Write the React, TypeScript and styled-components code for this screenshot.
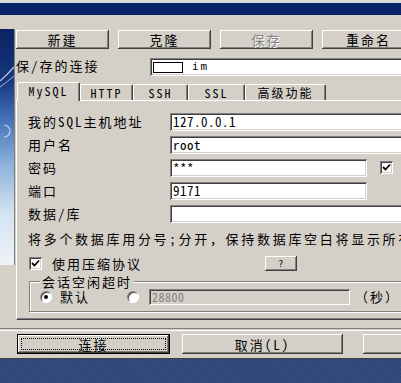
import React from "react";
import styled, { createGlobalStyle, css } from "styled-components";

const FONT = `"Noto Sans Mono CJK SC", "Noto Sans CJK SC", "DejaVu Sans", sans-serif`;
const FACE = "#d4d0c8";

const GlobalStyle = createGlobalStyle`
  html, body { margin: 0; padding: 0; background: ${FACE}; overflow: hidden; }
  body { font-family: ${FONT}; font-size: 13px; line-height: 16px; letter-spacing: 2px; color: #000; }
`;

const raised = css`
  box-shadow: inset -1px -1px #404040, inset 1px 1px #fff, inset -2px -2px #808080,
    inset 2px 2px ${FACE};
`;

const sunken = css`
  box-shadow: inset 1px 1px #808080, inset -1px -1px #fff, inset 2px 2px #404040,
    inset -2px -2px ${FACE};
`;

const Screen = styled.div`
  width: 401px;
  height: 383px;
  overflow: hidden;
  display: flex;
  flex-direction: column;
  background: ${FACE};
`;

const TopEdge = styled.div`
  flex: none;
  height: 3px;
  background: #dcdcdc;
`;

const TitleBar = styled.div`
  flex: none;
  height: 12px;
  background: #0a246a;
`;

const Body = styled.div`
  flex: none;
  display: grid;
  grid-template-columns: 16px 400px;
  height: 305px;
`;

const Banner = styled.div`
  margin-top: 14px;
  width: 15px;
  height: 236px;
  border-right: 1px solid #808080;
  box-sizing: border-box;
  svg {
    display: block;
  }
`;

const Main = styled.div`
  padding-top: 15px;
  display: flex;
  flex-direction: column;
`;

const ButtonRow = styled.div`
  display: grid;
  grid-template-columns: repeat(4, 93px);
  column-gap: 9px;
  height: 19px;
`;

const Button = styled.div<{ $disabled?: boolean }>`
  display: flex;
  align-items: center;
  justify-content: center;
  background: ${FACE};
  ${raised};
  font-size: 13px;
  line-height: 1;
  color: ${(p) => (p.$disabled ? "#808080" : "#000")};
  text-shadow: ${(p) => (p.$disabled ? "1px 1px 0 #fff" : "none")};
`;

const SavedRow = styled.div`
  margin-top: 9px;
  height: 18px;
  display: flex;
  align-items: center;
`;

const SavedLabel = styled.div`
  width: 134px;
  flex: none;
  white-space: nowrap;
  margin-top: -2px;
`;

const Combo = styled.div`
  flex: none;
  width: 270px;
  height: 18px;
  background: #fff;
  ${sunken};
  display: flex;
  align-items: center;
  padding-left: 3px;
  box-sizing: border-box;
`;

const Swatch = styled.div`
  width: 30px;
  height: 11px;
  border: 1px solid #000;
  box-sizing: border-box;
  background: #fff;
`;

const ComboText = styled.span`
  margin-left: 9px;
  font-family: "DejaVu Sans Mono", monospace;
  font-size: 11px;
  letter-spacing: 2px;
`;

const TabStrip = styled.div`
  margin-top: 6px;
  height: 18px;
  padding-left: 1px;
  display: flex;
  align-items: flex-end;
  position: relative;
  z-index: 1;
`;

const Tab = styled.div<{ $w: number; $active?: boolean }>`
  width: ${(p) => p.$w}px;
  height: ${(p) => (p.$active ? 19 : 16)}px;
  margin-bottom: ${(p) => (p.$active ? -1 : 0)}px;
  box-sizing: border-box;
  background: ${FACE};
  border-top: 1px solid #fff;
  border-left: 1px solid #fff;
  border-right: 1px solid #404040;
  border-radius: 2px 2px 0 0;
  box-shadow: inset -1px 0 #808080;
  display: flex;
  align-items: center;
  justify-content: center;
  font-size: 12px;
  line-height: 1;
  white-space: nowrap;
  padding-bottom: ${(p) => (p.$active ? 2 : 0)}px;
`;

const Panel = styled.div`
  width: 400px;
  height: 220px;
  box-sizing: border-box;
  border-left: 1px solid #fff;
  border-top: 1px solid #fff;
  border-bottom: 1px solid #404040;
  box-shadow: inset 0 -1px #808080;
  padding: 9px 0 0 11px;
  display: flex;
  flex-direction: column;
`;

const Fields = styled.div`
  display: grid;
  grid-template-columns: 142px 197px 60px;
  grid-auto-rows: 23px;
  align-items: center;
`;

const Label = styled.div`
  white-space: nowrap;
`;

const Input = styled.div<{ $full?: boolean; $disabled?: boolean }>`
  grid-column: ${(p) => (p.$full ? "2 / 4" : "2 / 3")};
  height: 18px;
  box-sizing: border-box;
  background: ${(p) => (p.$disabled ? FACE : "#fff")};
  color: ${(p) => (p.$disabled ? "#808080" : "#000")};
  ${sunken};
  display: flex;
  align-items: center;
  padding-left: 3px;
  font-size: 13px;
  letter-spacing: 0.5px;
  white-space: nowrap;
`;

const Check = styled.div<{ $offset?: number }>`
  width: 13px;
  height: 13px;
  box-sizing: border-box;
  margin-left: ${(p) => p.$offset ?? 0}px;
  background: #fff;
  ${sunken};
  display: flex;
  align-items: center;
  justify-content: center;
  svg {
    display: block;
  }
`;

const Hint = styled.div`
  margin-top: 4px;
  line-height: 20px;
  letter-spacing: 2.7px;
  white-space: nowrap;
  overflow: hidden;
`;

const CheckRow = styled.div`
  margin-top: 6px;
  height: 17px;
  display: grid;
  grid-template-columns: 237px 32px;
  align-items: center;
`;

const CheckLabel = styled.div`
  display: flex;
  align-items: center;
  gap: 10px;
  padding-left: 1px;
  white-space: nowrap;
`;

const SmallButton = styled.div`
  height: 15px;
  background: ${FACE};
  ${raised};
  display: flex;
  align-items: center;
  justify-content: center;
  font-family: "DejaVu Sans", sans-serif;
  font-size: 9px;
  letter-spacing: 0;
`;

const Group = styled.div`
  margin: 9px 0 0 1px;
  height: 31px;
  box-sizing: border-box;
  border: 1px solid #808080;
  box-shadow: inset 1px 1px #fff, 1px 1px #fff;
  padding-left: 10px;
`;

const Legend = styled.div`
  width: fit-content;
  margin: -8px 0 0 0;
  padding: 0 2px;
  line-height: 15px;
  background: ${FACE};
  white-space: nowrap;
`;

const RadioRow = styled.div`
  height: 16px;
  display: flex;
  align-items: center;
`;

const RadioOption = styled.div<{ $w?: number }>`
  display: flex;
  align-items: center;
  gap: 8px;
  width: ${(p) => (p.$w ? `${p.$w}px` : "auto")};
  flex: none;
`;

const Radio = styled.div<{ $on?: boolean }>`
  width: 12px;
  height: 12px;
  flex: none;
  box-sizing: border-box;
  border-radius: 50%;
  background: #fff;
  border: 1px solid;
  border-color: #808080 #fff #fff #808080;
  box-shadow: inset 1px 1px #404040;
  display: flex;
  align-items: center;
  justify-content: center;
  &::after {
    content: "";
    display: ${(p) => (p.$on ? "block" : "none")};
    width: 4px;
    height: 4px;
    border-radius: 50%;
    background: #000;
  }
`;

const TimeoutInput = styled(Input)`
  width: 201px;
  height: 16px;
  flex: none;
  margin-left: 10px;
  font-size: 12px;
`;

const Unit = styled.span`
  margin-left: 5px;
  white-space: nowrap;
`;

const Separator = styled.div`
  flex: none;
  margin-top: 8px;
  height: 1px;
  border-top: 1px solid #808080;
  border-bottom: 1px solid #fff;
`;

const BottomRow = styled.div`
  flex: none;
  margin-top: 3px;
  height: 20px;
  padding-left: 17px;
  display: flex;
`;

const BottomButton = styled(Button)<{ $w: number; $gap?: number }>`
  flex: none;
  width: ${(p) => p.$w}px;
  margin-left: ${(p) => p.$gap ?? 0}px;
`;

const DefaultButton = styled.div`
  flex: none;
  width: 153px;
  box-sizing: border-box;
  border: 1px solid #000;
  background: ${FACE};
  ${raised};
  display: flex;
  padding: 3px;
`;

const FocusRing = styled.div`
  flex: 1;
  border: 1px dotted #000;
  display: flex;
  align-items: center;
  justify-content: center;
  line-height: 1;
`;

const DialogFoot = styled.div`
  flex: none;
  height: 5px;
  box-sizing: border-box;
  border-bottom: 1px solid #404040;
`;

const Desktop = styled.div`
  flex: 1;
  background-color: #2e4878;
  background-image: repeating-linear-gradient(45deg, rgba(255, 255, 255, 0.04) 0 1px, transparent 1px 3px);
`;

function CheckMark() {
  return (
    <svg width="9" height="9" viewBox="0 0 9 9">
      <polyline points="1,4 3.5,6.5 8,1.5" fill="none" stroke="#000" strokeWidth="1.8" />
    </svg>
  );
}

function BannerArt() {
  return (
    <svg width="14" height="236" viewBox="0 0 14 236">
      <defs>
        <linearGradient id="bn" x1="0" y1="0" x2="0" y2="1">
          <stop offset="0" stopColor="#0b2262" />
          <stop offset="0.22" stopColor="#17387e" />
          <stop offset="0.4" stopColor="#4a78ba" />
          <stop offset="0.58" stopColor="#8fb3dc" />
          <stop offset="0.78" stopColor="#d4e3f2" />
          <stop offset="1" stopColor="#eef3f9" />
        </linearGradient>
      </defs>
      <rect width="14" height="236" fill="url(#bn)" />
      <path d="M0 52 Q7 46 14 38" stroke="#dfe9f7" strokeWidth="1.2" fill="none" opacity="0.8" />
      <path d="M0 58 Q8 52 14 47" stroke="#ffffff" strokeWidth="1" fill="none" opacity="0.6" />
      <path d="M4 96 A6 6 0 1 1 4 108" stroke="#e6eef9" strokeWidth="1.2" fill="none" opacity="0.7" />
    </svg>
  );
}

export default function App() {
  return (
    <>
      <GlobalStyle />
      <Screen>
        <TopEdge />
        <TitleBar />
        <Body>
          <Banner>
            <BannerArt />
          </Banner>
          <Main>
            <ButtonRow>
              <Button>新建</Button>
              <Button>克隆</Button>
              <Button $disabled>保存</Button>
              <Button>重命名</Button>
            </ButtonRow>
            <SavedRow>
              <SavedLabel>保/存的连接</SavedLabel>
              <Combo>
                <Swatch />
                <ComboText>im</ComboText>
              </Combo>
            </SavedRow>
            <TabStrip>
              <Tab $w={63} $active>
                MySQL
              </Tab>
              <Tab $w={53}>HTTP</Tab>
              <Tab $w={55}>SSH</Tab>
              <Tab $w={57}>SSL</Tab>
              <Tab $w={81}>高级功能</Tab>
            </TabStrip>
            <Panel>
              <Fields>
                <Label>我的SQL主机地址</Label>
                <Input $full>127.0.0.1</Input>
                <Label>用户名</Label>
                <Input $full>root</Input>
                <Label>密码</Label>
                <Input>***</Input>
                <Check $offset={13}>
                  <CheckMark />
                </Check>
                <Label>端口</Label>
                <Input>9171</Input>
                <span />
                <Label>数据/库</Label>
                <Input $full />
              </Fields>
              <Hint>将多个数据库用分号;分开，保持数据库空白将显示所有数据库</Hint>
              <CheckRow>
                <CheckLabel>
                  <Check>
                    <CheckMark />
                  </Check>
                  使用压缩协议
                </CheckLabel>
                <SmallButton>?</SmallButton>
              </CheckRow>
              <Group>
                <Legend>会话空闲超时</Legend>
                <RadioRow>
                  <RadioOption $w={87}>
                    <Radio $on />
                    默认
                  </RadioOption>
                  <Radio />
                  <TimeoutInput $disabled>28800</TimeoutInput>
                  <Unit>（秒）</Unit>
                </RadioRow>
              </Group>
            </Panel>
          </Main>
        </Body>
        <Separator />
        <BottomRow>
          <DefaultButton>
            <FocusRing>连接</FocusRing>
          </DefaultButton>
          <BottomButton $w={161} $gap={12}>
            取消(L)
          </BottomButton>
          <BottomButton $w={160} $gap={20}>
            帮助
          </BottomButton>
        </BottomRow>
        <DialogFoot />
        <Desktop />
      </Screen>
    </>
  );
}
